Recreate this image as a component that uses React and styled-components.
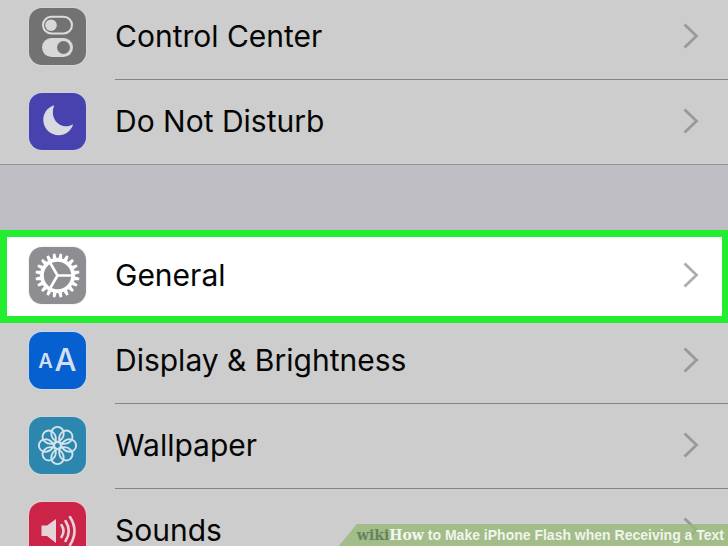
import React from "react";
import styled, { createGlobalStyle } from "styled-components";

const GlobalStyle = createGlobalStyle`
  * {
    box-sizing: border-box;
  }

  body {
    margin: 0;
    background-color: #cdcdcd;
    font-family: Inter, "Liberation Sans", sans-serif;
    color: #050505;
  }
`;

const Page = styled.main`
  position: relative;
  height: 100vh;
  overflow: hidden;
`;

const Group = styled.ul`
  list-style: none;
  margin: 0;
  padding: 0;
  background-color: #cdcdcd;

  &:first-of-type {
    margin-top: -6px;
    border-bottom: 1px solid #929294;
  }
`;

const Gap = styled.div`
  height: 68px;
  background-color: #bfbec4;
`;

const Item = styled.li`
  position: relative;
  background-color: ${({ $active }) => ($active ? "#ffffff" : "transparent")};

  & + & .row-body {
    border-top: 1px solid #858585;
  }
`;

const RowLink = styled.a`
  display: flex;
  align-items: center;
  gap: 29px;
  height: 85px;
  padding-left: 29px;
  color: inherit;
  text-decoration: none;
`;

const RowBody = styled.span`
  flex: 1;
  display: flex;
  align-items: center;
  justify-content: space-between;
  height: 100%;
  padding: 0 28px 2px 0;
  font-size: 30px;
  line-height: 30px;
`;

const Tile = styled.span`
  flex: none;
  display: block;
  width: 57px;
  height: 57px;
  border-radius: 13px;
  background-color: ${({ $color }) => $color};
  box-shadow: 0 0 1px 1px ${({ $rim }) => $rim};

  svg {
    display: block;
  }
`;

const Highlight = styled.div`
  position: absolute;
  z-index: 1;
  top: -3px;
  right: 0;
  bottom: -5px;
  left: 0;
  border: 7px solid #22ee2f;
  border-right-width: 6px;
  pointer-events: none;
`;

const Caption = styled.footer`
  position: absolute;
  z-index: 2;
  right: 0;
  bottom: 0;
  display: flex;
  align-items: center;
  height: 22px;
  padding: 0 4px 0 18px;
  background-color: rgba(151, 184, 121, 0.8);
  clip-path: polygon(18px 0, 100% 0, 100% 100%, 0 100%);
  font: bold 14px/22px "Liberation Sans", sans-serif;
  color: #f0f5eb;
  white-space: nowrap;
`;

const Brand = styled.span`
  font: bold 14px/22px "DejaVu Serif", serif;
  color: ${({ $dark }) => ($dark ? "#66845b" : "#f3f7ef")};
`;

const Title = styled.span`
  margin-left: 4px;
`;

const ControlsIcon = () => (
  <svg width="57" height="57" viewBox="0 0 57 57" aria-hidden="true">
    <rect x="14" y="8.8" width="29" height="16.6" rx="8.3" fill="none" stroke="#dcdcdc" strokeWidth="2" />
    <circle cx="22" cy="17.2" r="5.8" fill="#d8d8d8" />
    <rect x="13" y="30" width="31" height="19" rx="9.5" fill="#d8d8d8" />
    <circle cx="34.5" cy="39.5" r="6.5" fill="#727272" />
  </svg>
);

const MoonIcon = () => (
  <svg width="57" height="57" viewBox="0 0 57 57" aria-hidden="true">
    <path
      d="M25.2 12.2C17.8 14.5 14 20.9 14.3 27.5C14.7 35.9 21.4 42.2 29.8 42.2C36.6 42.2 42 38.1 44.2 31.3C41 33.2 37.6 33.8 34.2 32.9C26.2 30.9 21.3 22.2 25.2 12.2Z"
      fill="#d9d9e2"
    />
  </svg>
);

const TEETH = Array.from({ length: 20 }, (_, i) => i * 18);

const GearIcon = () => (
  <svg width="57" height="57" viewBox="-28.5 -28.5 57 57" aria-hidden="true">
    <circle r="15.6" fill="none" stroke="#ffffff" strokeWidth="3.8" />
    {TEETH.map((angle) => (
      <path
        key={angle}
        d="M-2 -17L-1.2 -22H1.2L2 -17Z"
        fill="#ffffff"
        transform={`rotate(${angle + 9})`}
      />
    ))}
    <path d="M0 0H15M0 0L-7.5 -13M0 0L-7.5 13" stroke="#ffffff" strokeWidth="2.6" />
  </svg>
);

const DisplayIcon = () => (
  <svg width="57" height="57" viewBox="0 0 57 57" fill="#d3dff0" aria-hidden="true">
    <text x="16.5" y="36" fontSize="20" fontWeight="600" textAnchor="middle">A</text>
    <text x="36.5" y="39" fontSize="31" fontWeight="500" textAnchor="middle">A</text>
  </svg>
);

const PETALS = [0, 45, 90, 135, 180, 225, 270, 315];

const FlowerIcon = () => (
  <svg width="57" height="57" viewBox="-28.5 -28.5 57 57" aria-hidden="true">
    <g fill="none" stroke="#d2e3ea" strokeWidth="1.9">
      {PETALS.map((angle) => (
        <path
          key={angle}
          d="M0 -3.5C-3.4 -5.2 -6.4 -8.4 -6.2 -12.4A6.2 6.2 0 0 1 6.2 -12.4C6.4 -8.4 3.4 -5.2 0 -3.5Z"
          transform={`rotate(${angle})`}
        />
      ))}
      <circle r="3.4" />
    </g>
  </svg>
);

const SpeakerIcon = () => (
  <svg width="57" height="57" viewBox="0 0 57 57" aria-hidden="true">
    <path d="M12.5 23.5H18L27 17V41L18 34H12.5Z" fill="#e6d3d7" />
    <g fill="none" stroke="#e6d3d7" strokeWidth="2.6" strokeLinecap="round">
      <path d="M32.5 23Q36.5 29 32.5 35" />
      <path d="M36.5 19Q43 29 36.5 39" />
      <path d="M41 15Q50 29 41 43" />
    </g>
  </svg>
);

const Chevron = () => (
  <svg width="18" height="28" viewBox="0 0 18 28" aria-hidden="true">
    <path d="M2.5 2.5L14.5 14L2.5 25.5" fill="none" stroke="#777777" strokeOpacity="0.6" strokeWidth="2.8" />
  </svg>
);

const alerts = [
  { title: "Control Center", color: "#727272", rim: "#d5d5d5", Icon: ControlsIcon },
  { title: "Do Not Disturb", color: "#4742ad", rim: "#cfcfe0", Icon: MoonIcon },
];

const settings = [
  { title: "General", color: "#8e8e92", rim: "#f4f4f4", Icon: GearIcon, active: true },
  { title: "Display & Brightness", color: "#0660cf", rim: "#c9d7ea", Icon: DisplayIcon },
  { title: "Wallpaper", color: "#2c86ae", rim: "#cad6db", Icon: FlowerIcon },
  { title: "Sounds", color: "#cc2448", rim: "#e6cdd2", Icon: SpeakerIcon },
];

const SettingsGroup = ({ items }) => (
  <Group>
    {items.map(({ title, color, rim, Icon, active }) => (
      <Item key={title} $active={active}>
        <RowLink href="#">
          <Tile $color={color} $rim={rim}>
            <Icon />
          </Tile>
          <RowBody className="row-body">
            {title}
            <Chevron />
          </RowBody>
        </RowLink>
        {active && <Highlight />}
      </Item>
    ))}
  </Group>
);

const App = () => (
  <>
    <GlobalStyle />
    <Page>
      <SettingsGroup items={alerts} />
      <Gap />
      <SettingsGroup items={settings} />
      <Caption>
        <Brand $dark>wiki</Brand>
        <Brand>How</Brand>
        <Title>to Make iPhone Flash when Receiving a Text</Title>
      </Caption>
    </Page>
  </>
);

export default App;
